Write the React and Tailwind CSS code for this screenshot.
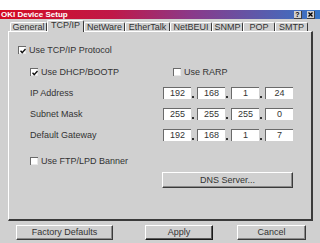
import React from "react";

// ─────────────────────────────────────────────────────────────────────────────
// Config
// ─────────────────────────────────────────────────────────────────────────────
const TABS = [
  { label: "General", w: "w-[37px]" },
  { label: "TCP/IP", w: "w-[37px]", active: true },
  { label: "NetWare", w: "w-[41px]" },
  { label: "EtherTalk", w: "w-[45px]" },
  { label: "NetBEUI", w: "w-[42px]" },
  { label: "SNMP", w: "w-[31px]" },
  { label: "POP", w: "w-[32px]" },
  { label: "SMTP", w: "w-[33px]" },
];

const ADDRESSES = [
  { label: "IP Address", parts: ["192", "168", "1", "24"] },
  { label: "Subnet Mask", parts: ["255", "255", "255", "0"] },
  { label: "Default Gateway", parts: ["192", "168", "1", "7"] },
];

function CheckBox({ checked, label }) {
  return (
    <div className="flex items-center gap-[3px]">
      <span className="w-[8px] h-[8px] bg-white border-t border-l border-[#6a6a6a] shadow-[inset_-1px_-1px_0_#e8e8e8] flex items-center justify-center">
        {checked && (
          <svg width="6" height="6" viewBox="0 0 6 6">
            <path d="M0.5 2.8 L2.2 4.6 L5.5 1" stroke="#111" strokeWidth="1.4" fill="none" />
          </svg>
        )}
      </span>
      <span>{label}</span>
    </div>
  );
}

function Button({ className, strong, children }) {
  return (
    <div
      className={`flex items-center justify-center bg-[#d0d0d0] border-t border-l border-white border-r border-b ${
        strong ? "border-r-[#1a1a1a] border-b-[#1a1a1a] shadow-[inset_-1px_-1px_0_#5a5a5a]" : "border-r-[#3a3a3a] border-b-[#3a3a3a] shadow-[inset_-1px_-1px_0_#8a8a8a]"
      } ${className}`}
    >
      {children}
    </div>
  );
}

export default function App() {
  return (
    <div className="w-[320px] h-[243px] bg-white flex flex-col overflow-hidden font-['Liberation_Sans',Arial,sans-serif] text-[9px] leading-none text-[#333333]">
      <div className="h-[10px]" />

      {/* ── Title bar ───────────────────────────────────────────────────────── */}
      <div className="h-[9px] flex items-center justify-between pl-[1px] pr-[5px] bg-[linear-gradient(to_right,#d40c22,#c01848_35%,#8a3a8a_60%,#3476c8)]">
        <span className="text-white font-bold text-[8px] leading-none">OKI Device Setup</span>
        <div className="flex items-center gap-[5px]">
          <span className="w-[8px] h-[8px] bg-[#d0d0d0] border-r border-b border-[#404040] flex items-center justify-center text-[7px] font-bold text-black">
            ?
          </span>
          <span className="w-[8px] h-[8px] bg-[#d0d0d0] border-r border-b border-[#404040] flex items-center justify-center">
            <svg width="5" height="5" viewBox="0 0 5 5">
              <path d="M0.5 0.5 L4.5 4.5 M4.5 0.5 L0.5 4.5" stroke="#000" strokeWidth="1.3" />
            </svg>
          </span>
        </div>
      </div>

      {/* ── Body ────────────────────────────────────────────────────────────── */}
      <div className="flex-1 bg-[#d0d0d0] pl-[8px] pr-[7px] flex flex-col">
        {/* Tabs */}
        <div className="h-[12px] flex items-end pl-[2px]">
          {TABS.map((t) =>
            t.active ? (
              <div
                key={t.label}
                className={`${t.w} h-[12px] -mb-px relative z-10 bg-[#d0d0d0] border-t border-l border-white border-r border-r-[#3a3a3a] rounded-t-[2px] flex items-center justify-center pb-[2px]`}
              >
                {t.label}
              </div>
            ) : (
              <div
                key={t.label}
                className={`${t.w} h-[9px] border-t border-l border-white border-r border-r-[#3a3a3a] rounded-t-[2px] flex items-center justify-center`}
              >
                {t.label}
              </div>
            )
          )}
        </div>

        {/* Panel */}
        <div className="h-[190px] border-t border-l border-white border-r-2 border-b-2 border-r-[#3a3a3a] border-b-[#3a3a3a] flex flex-col">
          <div className="h-[12px] mt-[12px] flex items-center pl-[9px]">
            <CheckBox checked label="Use TCP/IP Protocol" />
          </div>

          <div className="h-[12px] mt-[10px] flex items-center pl-[21px]">
            <div className="w-[143px]">
              <CheckBox checked label="Use DHCP/BOOTP" />
            </div>
            <CheckBox label="Use RARP" />
          </div>

          <div className="mt-[9px] flex flex-col gap-[9px]">
            {ADDRESSES.map((row) => (
              <div key={row.label} className="h-[12px] flex items-center pl-[21px]">
                <span className="w-[133px]">{row.label}</span>
                <div className="flex items-stretch h-[12px]">
                  {row.parts.map((p, i) => (
                    <React.Fragment key={i}>
                      {i > 0 && (
                        <span className="w-[6px] flex items-end pl-[1px] pb-[1px]">
                          <span className="w-[2px] h-[2px] bg-[#333333]" />
                        </span>
                      )}
                      <span className="w-[28px] bg-white border-t border-l border-[#6a6a6a] flex items-center justify-center">
                        {p}
                      </span>
                    </React.Fragment>
                  ))}
                </div>
              </div>
            ))}
          </div>

          <div className="h-[12px] mt-[14px] flex items-center pl-[21px]">
            <CheckBox label="Use FTP/LPD Banner" />
          </div>

          <div className="mt-[5px] pl-[153px]">
            <Button className="w-[131px] h-[16px]">DNS Server...</Button>
          </div>
        </div>

        {/* Bottom buttons */}
        <div className="mt-[4px] flex items-center pl-[8px]">
          <Button className="w-[97px] h-[15px]">Factory Defaults</Button>
          <Button strong className="w-[68px] h-[15px] ml-[32px]">Apply</Button>
          <Button className="w-[69px] h-[15px] ml-[24px]">Cancel</Button>
        </div>
      </div>
    </div>
  );
}
